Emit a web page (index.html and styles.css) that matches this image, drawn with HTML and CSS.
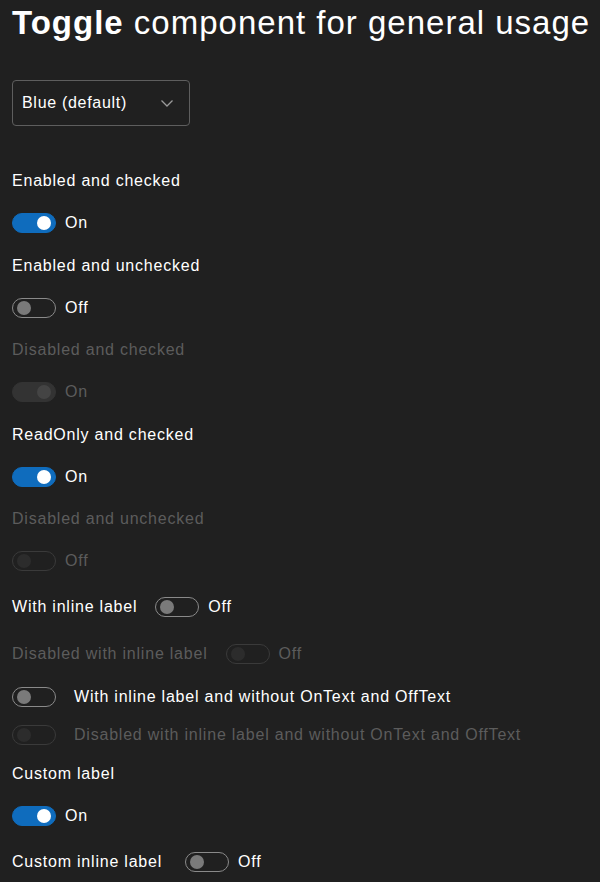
FILE: index.html
```html
<!DOCTYPE html>
<html lang="en">
<head>
  <meta charset="UTF-8">
  <title>Toggle</title>
  <link rel="stylesheet" href="styles.css">
</head>
<body>

  <h1 class="title"><b>Toggle</b> component for general usage</h1>

  <div class="dropdown">
    <span>Blue (default)</span>
    <svg class="chevron" width="14" height="14" viewBox="0 0 14 14"><path d="M1.5 4.5l5.5 5.5 5.5-5.5" fill="none" stroke="currentColor" stroke-width="1.3"/></svg>
  </div>

  <div class="list">
    <div class="field">
      <div class="field-label">Enabled and checked</div>
      <div class="toggle-row"><span class="switch on"></span><span class="state">On</span></div>
    </div>

    <div class="field">
      <div class="field-label">Enabled and unchecked</div>
      <div class="toggle-row"><span class="switch"></span><span class="state">Off</span></div>
    </div>

    <div class="field disabled">
      <div class="field-label">Disabled and checked</div>
      <div class="toggle-row"><span class="switch on"></span><span class="state">On</span></div>
    </div>

    <div class="field">
      <div class="field-label">ReadOnly and checked</div>
      <div class="toggle-row"><span class="switch on"></span><span class="state">On</span></div>
    </div>

    <div class="field disabled">
      <div class="field-label">Disabled and unchecked</div>
      <div class="toggle-row"><span class="switch"></span><span class="state">Off</span></div>
    </div>

    <div class="inline-field">
      <span class="inline-label">With inline label</span>
      <span class="switch"></span><span class="state">Off</span>
    </div>

    <div class="inline-field disabled">
      <span class="inline-label">Disabled with inline label</span>
      <span class="switch"></span><span class="state">Off</span>
    </div>

    <div class="plain-field">
      <span class="switch"></span>
      <span class="plain-label">With inline label and without OnText and OffText</span>
    </div>

    <div class="plain-field disabled">
      <span class="switch"></span>
      <span class="plain-label">Disabled with inline label and without OnText and OffText</span>
    </div>

    <div class="field">
      <div class="field-label">Custom label</div>
      <div class="toggle-row"><span class="switch on"></span><span class="state">On</span></div>
    </div>

    <div class="inline-field">
      <span class="inline-label custom">Custom inline label</span>
      <span class="switch"></span><span class="state">Off</span>
    </div>
  </div>

</body>
</html>
```

FILE: styles.css
```css
body {
  margin: 0;
  padding: 3px 12px 0;
  background: #202020;
  color: #ffffff;
  font-family: "Liberation Sans", Arial, sans-serif;
  font-size: 16px;
  letter-spacing: 0.78px;
}

.title {
  margin: 0;
  font-size: 33px;
  line-height: 40px;
  letter-spacing: 1px;
  font-weight: normal;
  white-space: nowrap;
}

.title b {
  font-weight: bold;
}

.dropdown {
  margin-top: 37px;
  height: 44px;
  width: 152px;
  border: 1px solid #5e5e5e;
  border-radius: 4px;
  display: flex;
  align-items: center;
  justify-content: space-between;
  padding: 0 15px 0 9px;
  letter-spacing: 0.7px;
}

.chevron {
  color: #9a9a9a;
}

.list {
  margin-top: 44px;
  display: flex;
  flex-direction: column;
}

.field {
  margin-bottom: 20.5px;
}

.field-label {
  line-height: 22px;
  margin-bottom: 20px;
}

.toggle-row,
.inline-field,
.plain-field {
  display: flex;
  align-items: center;
}

.toggle-row {
  height: 22px;
}

.inline-field {
  height: 29px;
  margin-bottom: 18px;
}

.plain-field {
  height: 21px;
  margin-bottom: 17px;
}

.inline-label {
  margin-right: 18px;
}

.inline-label.custom {
  margin-right: 23px;
}

.plain-label {
  margin-left: 18px;
}

.state {
  margin-left: 9px;
}

.switch {
  position: relative;
  width: 44px;
  height: 20px;
  box-sizing: border-box;
  border: 1px solid #8a8a8a;
  border-radius: 10px;
  flex: none;
}

.switch::after {
  content: "";
  position: absolute;
  top: 2px;
  left: 4px;
  width: 14px;
  height: 14px;
  border-radius: 50%;
  background: #7a7a7a;
}

.switch.on {
  background: #0f6cbd;
  border-color: #0f6cbd;
}

.switch.on::after {
  left: auto;
  right: 4px;
  background: #ffffff;
}

.disabled {
  color: #5c5c5c;
}

.disabled .switch {
  border-color: #3a3a3a;
}

.disabled .switch::after {
  background: #2c2c2c;
}

.disabled .switch.on {
  background: #333333;
  border-color: #333333;
}

.disabled .switch.on::after {
  background: #444444;
}
```
